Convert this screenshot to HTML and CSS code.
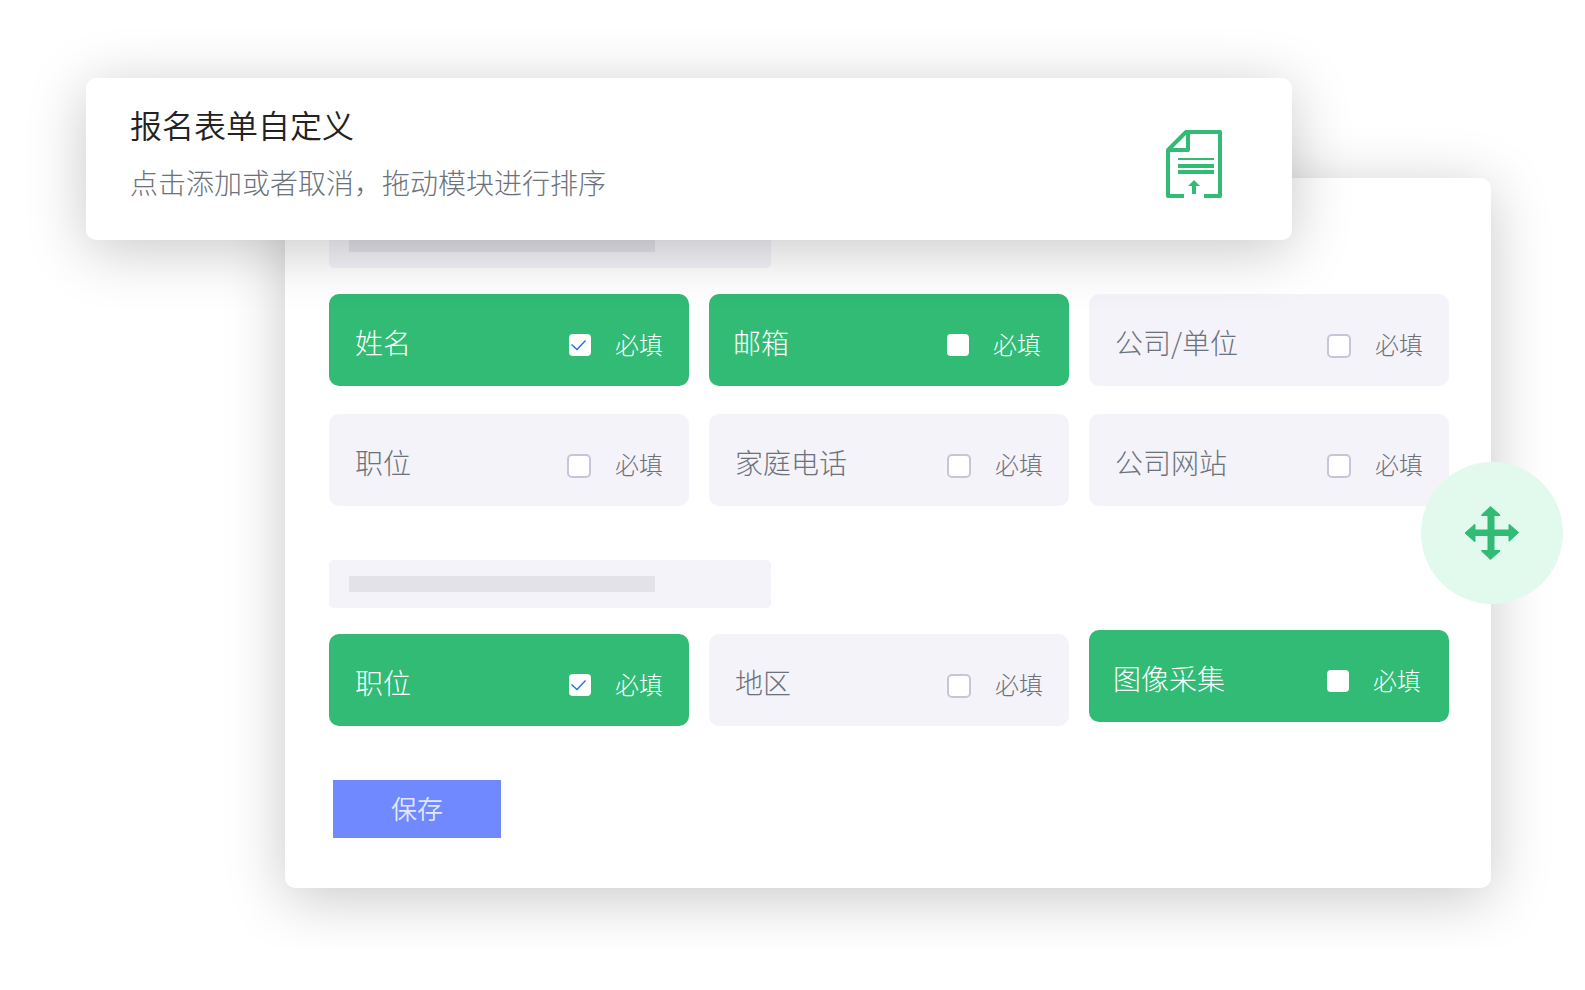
FILE: index.html
```html
<!DOCTYPE html>
<html lang="zh-CN">
<head>
    <meta charset="UTF-8">
    <meta name="viewport" content="width=device-width, initial-scale=1">
    <title>报名表单自定义</title>
    <link rel="stylesheet" href="styles.css">
</head>
<body>
<header class="banner">
    <div class="banner-text">
        <h1>报名表单自定义</h1>
        <p>点击添加或者取消，拖动模块进行排序</p>
    </div>
    <svg class="icon-form" width="56" height="68" viewBox="0 0 56 68" aria-hidden="true">
        <g fill="none" stroke="#31bb74" stroke-width="4" stroke-linejoin="round">
            <path d="M18 66H2V20L20 2H54V66H38"/>
            <path d="M2 20H22V2"/>
        </g>
        <path fill="#31bb74" d="M12 28h36v2H12zM12 34h36v4H12zM12 40h36v4H12zM28 50l6 6h-4v8h-4v-8h-4z"/>
    </svg>
</header>
<form class="panel">
    <div class="group-title"><span></span></div>
    <ul class="fields">
        <li class="field active">
            <span class="name">姓名</span>
            <label><input type="checkbox" checked>必填</label>
        </li>
        <li class="field active optional">
            <span class="name">邮箱</span>
            <label><input type="checkbox">必填</label>
        </li>
        <li class="field">
            <span class="name">公司/单位</span>
            <label><input type="checkbox">必填</label>
        </li>
        <li class="field">
            <span class="name">职位</span>
            <label><input type="checkbox">必填</label>
        </li>
        <li class="field">
            <span class="name">家庭电话</span>
            <label><input type="checkbox">必填</label>
        </li>
        <li class="field">
            <span class="name">公司网站</span>
            <label><input type="checkbox">必填</label>
        </li>
    </ul>
    <div class="group-title"><span></span></div>
    <ul class="fields">
        <li class="field active">
            <span class="name">职位</span>
            <label><input type="checkbox" checked>必填</label>
        </li>
        <li class="field">
            <span class="name">地区</span>
            <label><input type="checkbox">必填</label>
        </li>
        <li class="field active optional dragging">
            <span class="name">图像采集</span>
            <label><input type="checkbox">必填</label>
        </li>
    </ul>
    <button class="save" type="button">保存</button>
    <button class="move" type="button" aria-label="拖动">
        <svg width="56" height="54" viewBox="0 0 56 54" aria-hidden="true">
            <path fill="#31bb74" stroke="#31bb74" stroke-linejoin="round" d="M26.500 .5l9.500 8.500v.5h-6v14.500h15v-5.500h.5l9 8-9 8.500h-.5V29.500H30V44.500h6v.5l-9.500 8.500L17.500 45v-.5h6.500V29.500H11v6h-.5L1 27l9.500-8.500h.5V24h13V9.500h-6.500V9z"/>
        </svg>
    </button>
</form>
</body>
</html>
```
FILE: styles.css
```css
*{
    margin: 0;
    padding: 0;
    box-sizing: border-box;
}
body{
    font-family: "Noto Sans CJK SC", "Noto Sans", sans-serif;
    font-weight: 300;
    color: #6b727b;
    background: #fff;
    padding: 78px 94px 60px 86px;
}
ul{
    list-style: none;
}
.banner, .panel{
    position: relative;
    background: #fff;
    border-radius: 10px;
    box-shadow: 0 10px 60px rgba(0,0,0,0.22);
}
/* 顶部说明, 盖在表单面板上面 */
.banner{
    z-index: 1;
    display: flex;
    justify-content: space-between;
    align-items: center;
    margin-right: 199px;
    padding: 26px 70px 16px 44px;
}
.banner h1{
    font-size: 32px;
    line-height: 40px;
    font-weight: 350;
    color: #222;
}
.banner p{
    margin-top: 18px;
    font-size: 28px;
    line-height: 40px;
    padding-bottom: 22px;
}
.icon-form{
    flex: none;
}
.panel{
    margin: -62px 0 0 199px;
    padding: 42px 42px 50px 44px;
}
.group-title{
    width: 442px;
    max-width: 100%;
    padding: 16px 20px;
    border-radius: 5px;
    background: #f4f3f9;
}
.group-title span{
    display: block;
    width: 306px;
    max-width: 100%;
    height: 16px;
    background: #e3e2e8;
}
.fields{
    display: grid;
    grid-template-columns: repeat(3, 1fr);
    gap: 28px 20px;
    margin: 26px 0 54px;
}
.field{
    display: flex;
    justify-content: space-between;
    padding: 28px 26px 24px;
    border-radius: 10px;
    background: #f4f3f9;
}
.field .name{
    font-size: 28px;
    line-height: 40px;
}
.field label{
    display: flex;
    gap: 24px;
    padding-top: 10px;
    font-size: 24px;
    line-height: 24px;
    cursor: pointer;
}
.field input{
    appearance: none;
    width: 24px;
    height: 24px;
    margin-top: 2px;
    border: 2px solid #c5c6d8;
    border-radius: 5px;
    background: #fff;
    cursor: pointer;
}
.active{
    color: #fff;
    background: #31bb74;
}
.active input{
    width: 22px;
    height: 22px;
    border: none;
    border-radius: 4px;
}
.active input:checked{
    background: #fff url("data:image/svg+xml,%3Csvg xmlns='http://www.w3.org/2000/svg' viewBox='0 0 22 22'%3E%3Cpath d='M2.500 10.500l5.500 5 8.500-9' fill='none' stroke='%231e6be6' stroke-width='1.300'/%3E%3C/svg%3E");
}
.optional{
    padding-left: 24px;
    padding-right: 28px;
}
/* 正在拖动的模块 */
.dragging{
    transform: translateY(-4px);
}
.save{
    display: block;
    width: 168px;
    margin-left: 4px;
    padding-bottom: 2px;
    border: none;
    font-family: inherit;
    font-size: 26px;
    font-weight: 350;
    line-height: 56px;
    color: #e2e7ff;
    background: #7089ff;
    cursor: pointer;
}
.move{
    position: absolute;
    top: 284px;
    right: -72px;
    display: flex;
    justify-content: center;
    align-items: center;
    width: 142px;
    height: 142px;
    border: none;
    border-radius: 50%;
    background: #e2faee;
    cursor: move;
}
```
